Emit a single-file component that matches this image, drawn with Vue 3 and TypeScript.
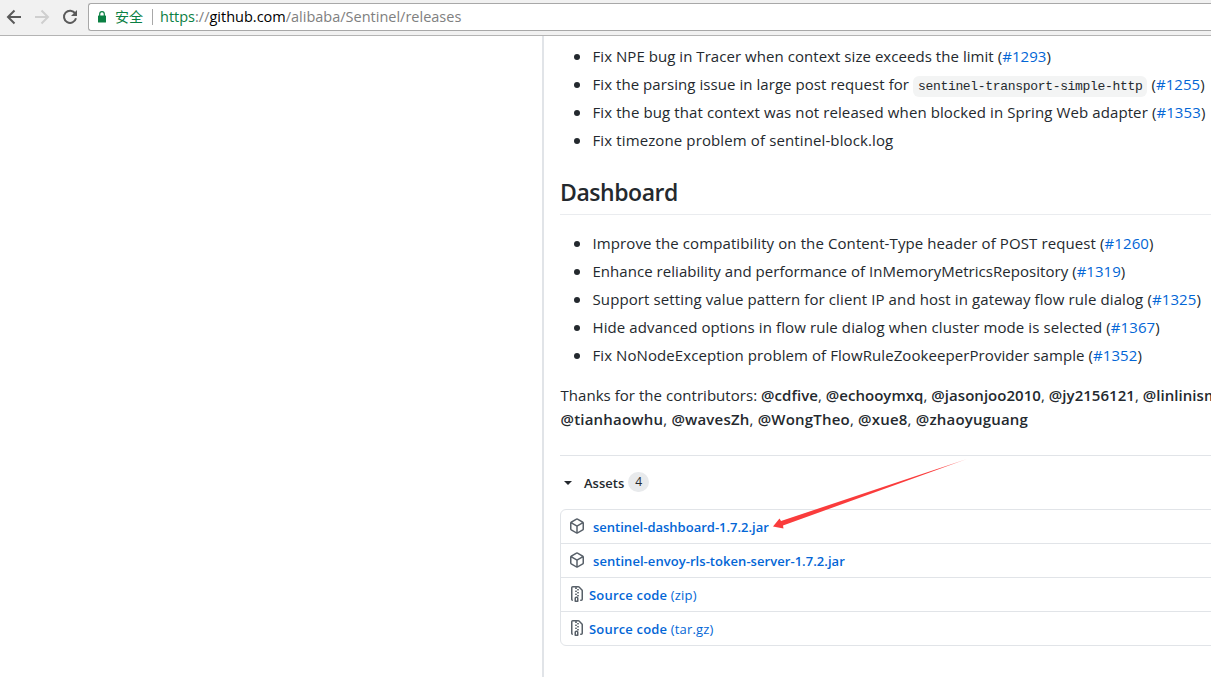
<script setup lang="ts">
interface Note {
  text: string;
  code?: string;
  issue?: string;
  tracking: number;
}

interface Asset {
  name: string;
  kind: 'package' | 'zip';
  suffix?: string;
  tracking: number;
}

const fixes: Note[] = [
  { text: 'Fix NPE bug in Tracer when context size exceeds the limit', issue: '#1293', tracking: 0.05 },
  {
    text: 'Fix the parsing issue in large post request for',
    code: 'sentinel-transport-simple-http',
    issue: '#1255',
    tracking: 0.06,
  },
  {
    text: 'Fix the bug that context was not released when blocked in Spring Web adapter',
    issue: '#1353',
    tracking: 0.1,
  },
  { text: 'Fix timezone problem of sentinel-block.log', tracking: 0.12 },
];

const improvements: Note[] = [
  {
    text: 'Improve the compatibility on the Content-Type header of POST request',
    issue: '#1260',
    tracking: 0.1,
  },
  {
    text: 'Enhance reliability and performance of InMemoryMetricsRepository',
    issue: '#1319',
    tracking: 0.04,
  },
  {
    text: 'Support setting value pattern for client IP and host in gateway flow rule dialog',
    issue: '#1325',
    tracking: 0.11,
  },
  {
    text: 'Hide advanced options in flow rule dialog when cluster mode is selected',
    issue: '#1367',
    tracking: 0.1,
  },
  {
    text: 'Fix NoNodeException problem of FlowRuleZookeeperProvider sample',
    issue: '#1352',
    tracking: 0.08,
  },
];

const sections = [
  { title: '', notes: fixes },
  { title: 'Dashboard', notes: improvements },
];

const contributorLines = [
  {
    lead: 'Thanks for the contributors: ',
    names: ['@cdfive', '@echooymxq', '@jasonjoo2010', '@jy2156121', '@linlinism'],
    tracking: 0.04,
  },
  {
    lead: '',
    names: ['@tianhaowhu', '@wavesZh', '@WongTheo', '@xue8', '@zhaoyuguang'],
    tracking: 0.2,
  },
];

const assets: Asset[] = [
  { name: 'sentinel-dashboard-1.7.2.jar', kind: 'package', tracking: 0 },
  { name: 'sentinel-envoy-rls-token-server-1.7.2.jar', kind: 'package', tracking: 0.05 },
  { name: 'Source code', kind: 'zip', suffix: '(zip)', tracking: 0.18 },
  { name: 'Source code', kind: 'zip', suffix: '(tar.gz)', tracking: 0.18 },
];

const iconPaths: Record<Asset['kind'], string> = {
  package:
    'M8.878.392a1.75 1.75 0 00-1.756 0l-5.25 3.045A1.75 1.75 0 001 4.951v6.098c0 .624.332 1.2.872 1.514l5.25 3.045a1.75 1.75 0 001.756 0l5.25-3.045c.54-.313.872-.89.872-1.514V4.951c0-.624-.332-1.2-.872-1.514L8.878.392zM7.875 1.69a.25.25 0 01.25 0l4.63 2.685L8 7.133 3.245 4.375l4.63-2.685zM2.5 5.677v5.372c0 .09.047.171.125.216l4.625 2.683V8.432L2.5 5.677zm6.25 8.271l4.625-2.683a.25.25 0 00.125-.216V5.677L8.75 8.432v5.516z',
  zip: 'M3.5 1.75a.25.25 0 01.25-.25h3a.75.75 0 000 1.5h.5a.75.75 0 000-1.5h2.086a.25.25 0 01.177.073l2.914 2.914a.25.25 0 01.073.177v8.586a.25.25 0 01-.25.25h-.5a.75.75 0 000 1.5h.5A1.75 1.75 0 0014 13.25V4.664c0-.464-.184-.909-.513-1.237L10.573.513A1.75 1.75 0 009.336 0H3.75A1.75 1.75 0 002 1.75v11.5c0 .649.353 1.214.874 1.515a.75.75 0 10.752-1.298.25.25 0 01-.126-.217V1.75zM8.75 3a.75.75 0 000 1.5h.5a.75.75 0 000-1.5h-.5zM6 5.25a.75.75 0 01.75-.75h.5a.75.75 0 010 1.5h-.5A.75.75 0 016 5.25zm2 1.5A.75.75 0 018.75 6h.5a.75.75 0 010 1.5h-.5A.75.75 0 018 6.75zm-1.25.75a.75.75 0 000 1.5h.5a.75.75 0 000-1.5h-.5zM8 9.75A.75.75 0 018.75 9h.5a.75.75 0 010 1.5h-.5A.75.75 0 018 9.75zm-.75.75a1.75 1.75 0 00-1.75 1.75v3c0 .414.336.75.75.75h2.5a.75.75 0 00.75-.75v-3a1.75 1.75 0 00-1.75-1.75h-.5zM7 12.25a.25.25 0 01.25-.25h.5a.25.25 0 01.25.25v2.25H7v-2.25z',
};

const spacing = (tracking: number) => ({ letterSpacing: `${tracking}px` });
</script>

<template>
  <div class="browser">
    <header class="toolbar">
      <div class="toolbar__nav">
        <svg width="16" height="16" viewBox="0 0 16 16" class="nav-icon">
          <path d="M15 8H2.500M8.500 1.500L2 8L8.500 14.500" />
        </svg>
        <svg width="16" height="16" viewBox="0 0 16 16" class="nav-icon nav-icon--disabled">
          <path d="M1 8h12.500M7.500 1.500L14 8L7.500 14.500" />
        </svg>
        <svg width="16" height="16" viewBox="0 0 16 16" class="nav-icon">
          <path d="M13.2 4.4A6.1 6.1 0 1 0 14 9.3" />
          <path d="M15 1v6H9z" class="nav-icon__head" />
        </svg>
      </div>
      <div class="address">
        <svg width="8" height="12" viewBox="0 0 8 12" class="address__lock">
          <path d="M1.7 5V3a2.3 2.3 0 0 1 4.6 0v2" fill="none" stroke="#0b8043" stroke-width="1.2" />
          <rect y="4.5" width="8" height="7" rx="0.6" fill="#0b8043" />
        </svg>
        <span class="address__secure">安全</span>
        <span class="address__divider"></span>
        <span class="address__url"
          ><span class="address__scheme">https</span>://<span class="address__host">github.com</span
          >/alibaba/Sentinel/releases</span
        >
      </div>
    </header>

    <main class="page">
      <article class="release">
        <section v-for="section in sections" :key="section.title">
          <h2 v-if="section.title" class="release__title">{{ section.title }}</h2>
          <ul class="notes">
            <li v-for="note in section.notes" :key="note.text" class="notes__item">
              <span :style="spacing(note.tracking)"
                >{{ note.text }}
                <template v-if="note.code"
                  ><code class="notes__code">{{ note.code }}</code
                  >{{ ' ' }}</template
                ><template v-if="note.issue"
                  >(<a class="link">{{ note.issue }}</a>)</template
                ></span
              >
            </li>
          </ul>
        </section>

        <p class="thanks">
          <span
            v-for="line in contributorLines"
            :key="line.names[0]"
            class="thanks__line"
            :style="spacing(line.tracking)"
            >{{ line.lead
            }}<template v-for="(name, i) in line.names" :key="name"
              ><template v-if="i">, </template><strong>{{ name }}</strong></template
            ></span
          >
        </p>

        <section class="assets">
          <div class="assets__summary">
            <span class="assets__caret"></span>
            <span class="assets__label">Assets</span>
            <span class="assets__count">4</span>
          </div>
          <div class="assets__box">
            <div
              v-for="asset in assets"
              :key="asset.name + asset.suffix"
              class="asset"
              :class="`asset--${asset.kind}`"
            >
              <svg width="16" height="16" viewBox="0 0 16 16" class="asset__icon">
                <path :d="iconPaths[asset.kind]" fill-rule="evenodd" />
              </svg>
              <a class="link" :style="spacing(asset.tracking)"
                ><strong>{{ asset.name }}</strong
                ><template v-if="asset.suffix">{{ ' ' + asset.suffix }}</template></a
              >
            </div>
          </div>
          <svg width="196" height="74" viewBox="0 0 196 74" class="assets__pointer">
            <defs>
              <linearGradient id="pointer-fade" x1="0" y1="0" x2="1" y2="0">
                <stop offset="0.85" stop-color="#fa3c3c" />
                <stop offset="1" stop-color="#fa3c3c" stop-opacity="0.6" />
              </linearGradient>
            </defs>
            <path d="M195 2L9 64L7.500 61.500L1 69.500L11.500 71.500L11 68.500Z" fill="url(#pointer-fade)" />
          </svg>
        </section>
      </article>
    </main>
  </div>
</template>

<style>
body {
  margin: 0;
  overflow: hidden;
}
</style>

<style scoped>
.browser {
  display: flex;
  flex-direction: column;
  height: 677px;
  overflow: hidden;
  background: #ffffff;
  color: #24292e;
  font-family: 'Open Sans', 'Noto Sans CJK SC', sans-serif;
  font-size: 15px;
}

.toolbar {
  display: flex;
  flex: none;
  align-items: flex-start;
  box-sizing: border-box;
  height: 36px;
  padding-top: 3px;
  border-bottom: 1px solid #b4b4b4;
  background: #f1f1f1;
}

.toolbar__nav {
  display: flex;
  gap: 12px;
  width: 82px;
  padding: 6px 0 0 6px;
}

.nav-icon {
  fill: none;
  stroke: #5a5a5a;
  stroke-width: 2;
}

.nav-icon--disabled {
  stroke: #cfcfcf;
}

.nav-icon__head {
  fill: #5a5a5a;
  stroke: none;
}

.address {
  display: flex;
  flex: 1;
  align-items: center;
  box-sizing: border-box;
  height: 28px;
  padding-left: 9px;
  border: 1px solid #a8a8a8;
  border-right: 0;
  border-radius: 3px 0 0 3px;
  background: #ffffff;
  white-space: nowrap;
}

.address__lock {
  flex: none;
}

.address__secure {
  margin: -2px 0 0 9px;
  color: #0b8043;
  font-family: 'Noto Sans CJK SC', sans-serif;
  font-size: 14px;
  line-height: 20px;
}

.address__divider {
  width: 1px;
  height: 16px;
  margin: 0 7px 0 9px;
  background: #a8a8a8;
}

.address__url {
  margin-top: -2px;
  color: #808080;
  font-size: 14.5px;
}

.address__scheme {
  color: #0b8043;
}

.address__host {
  color: #000000;
}

.page {
  flex: 1;
  margin-left: 542px;
  border-left: 2px solid #e1e4e8;
}

.release {
  width: 900px;
  padding: 8px 0 0 16px;
  line-height: 24px;
}

.release__title {
  margin: 25px 0 16px;
  padding-bottom: 7px;
  border-bottom: 1px solid #eaecef;
  font-size: 23px;
  font-weight: 600;
  letter-spacing: -0.45px;
  line-height: 30px;
}

.notes {
  margin: 0;
  padding-left: 14px;
  list-style: none;
}

.notes__item {
  display: flex;
  align-items: center;
  gap: 12.5px;
  height: 24px;
  white-space: nowrap;
}

.notes__item::before {
  width: 6px;
  height: 6px;
  margin-top: 2px;
  border-radius: 50%;
  background: #24292e;
  content: '';
}

.notes__item + .notes__item {
  margin-top: 4px;
}

.notes__code {
  padding: 3px 5px;
  border-radius: 6px;
  background: #f3f4f4;
  font-family: 'Liberation Mono', monospace;
  font-size: 13px;
  letter-spacing: -0.32px;
  line-height: 1;
}

.link {
  color: #0366d6;
}

strong {
  font-weight: 600;
}

.thanks {
  margin: 16px 0 0;
  padding-left: 0.5px;
}

.thanks__line {
  display: block;
  white-space: nowrap;
}

.assets {
  position: relative;
  margin-top: 24px;
  border-top: 1px solid #e1e4e8;
  font-size: 13px;
}

.assets__summary {
  display: flex;
  align-items: center;
  height: 53px;
}

.assets__caret {
  margin-left: 4px;
  border: 4px solid transparent;
  border-top-color: #24292e;
  border-bottom: 0;
}

.assets__label {
  margin-left: 12px;
  font-weight: 600;
}

.assets__count {
  box-sizing: border-box;
  width: 21px;
  height: 20px;
  margin: -2px 0 0 4px;
  border-radius: 10px;
  background: #e8eaec;
  font-size: 12px;
  line-height: 20px;
  text-align: center;
}

.assets__box {
  border: 1px solid #e1e4e8;
  border-radius: 6px;
}

.asset {
  display: flex;
  align-items: center;
  height: 33px;
  padding-left: 8px;
  white-space: nowrap;
}

.asset + .asset {
  border-top: 1px solid #e1e4e8;
}

.asset__icon {
  flex: none;
  margin: -2px 8px 0 0;
  fill: #586069;
}

.asset--zip .asset__icon {
  margin-right: 4px;
}

/* red callout pointing at the dashboard jar */
.assets__pointer {
  position: absolute;
  top: 1px;
  left: 212px;
}
</style>
